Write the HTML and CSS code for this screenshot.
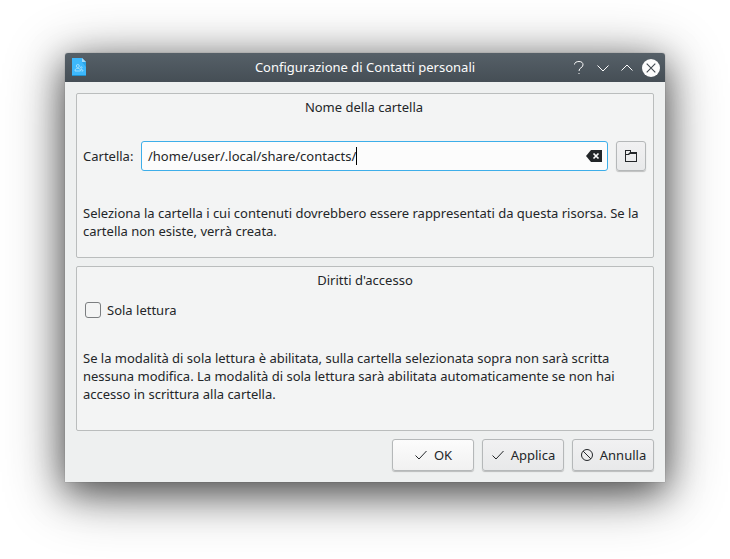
FILE: index.html
```html
<!DOCTYPE html>
<html lang="it">
<head>
<meta charset="utf-8">
<title>Configurazione di Contatti personali</title>
<link rel="stylesheet" href="styles.css">
</head>
<body>
<main class="window">
  <header class="titlebar">
    <svg class="app-icon" width="14" height="18" viewBox="0 0 14 18">
      <path d="M0 0h10l4 4v14H0z" fill="#3db8fc"/>
      <path d="M0 17h14v1H0z" fill="#2091cf"/>
      <path d="M10 4h4v5z" fill="#2ba3e5"/>
      <path d="M10 0l4 4h-4z" fill="#a5dcfa"/>
      <g fill="none" stroke="#a5e0ff" stroke-width=".9"><circle cx="5.800" cy="8" r="1.500"/><path d="M3 13c0-2 1-2.600 2.800-2.600S8.500 11 8.500 13z"/><circle cx="9.300" cy="9.500" r=".8"/><path d="M9 11.500c1.500 0 2 .5 2 1.500H9.500"/></g>
    </svg>
    <h1>Configurazione di Contatti personali</h1>
    <svg class="controls" width="90" height="20" viewBox="0 0 90 20" fill="none" stroke="#fcfcfc">
      <path d="M4.500 6.500C4.500 4.500 6.500 3.500 9 3.500c2.700 0 4 1.300 4 3.400 0 3.100-4 2.500-4 6.100"/>
      <path d="M8.500 15.500h1"/>
      <path d="M27.500 7.500l5.500 5.500 5.500-5.500M51.500 12.500L57 7l5.500 5.500"/>
      <circle cx="81" cy="10" r="9" fill="#fcfcfc" stroke="none"/>
      <path d="M76.700 5.700l8.600 8.600M85.300 5.700l-8.600 8.600" stroke="#414950" stroke-width="1.100"/>
    </svg>
  </header>
  <section class="group">
    <h2 class="folder-title">Nome della cartella</h2>
    <div class="path-row">
      <label>Cartella:</label>
      <div class="field"><span class="value">/home/user/.local/share/contacts/</span><span class="caret"></span>
        <svg class="clear" width="16" height="12" viewBox="0 0 16 12"><path d="M0 6l5-6h11v12H5z" fill="#232629"/><path d="M7.500 3.500l5 5M12.500 3.500l-5 5" stroke="#fcfcfc" stroke-width="1.700"/></svg>
      </div>
      <button class="browse"><svg width="12" height="12" viewBox="0 0 12 12"><path d="M0 0h6v2h6v10H0zM1 1v3h2l2-2V1zM1 5v6h10V4H5L4 5z" fill="#232629" fill-rule="evenodd"/></svg></button>
    </div>
    <p class="folder-text">Seleziona la cartella i cui contenuti dovrebbero essere rappresentati da questa risorsa. Se la<br>cartella non esiste, verrà creata.</p>
  </section>
  <section class="group">
    <h2>Diritti d'accesso</h2>
    <label class="check"><span class="box"></span>Sola lettura</label>
    <p class="rights-text">Se la modalità di sola lettura è abilitata, sulla cartella selezionata sopra non sarà scritta<br>nessuna modifica. La modalità di sola lettura sarà abilitata automaticamente se non hai<br>accesso in scrittura alla cartella.</p>
  </section>
  <footer class="actions">
    <button class="btn ok"><svg width="14" height="14" viewBox="0 0 14 14"><path d="M1.500 7.500l3.500 3.500 7.500-8" fill="none" stroke="#232629"/></svg>OK</button>
    <button class="btn"><svg width="14" height="14" viewBox="0 0 14 14"><path d="M1.500 7.500l3.500 3.500 7.500-8" fill="none" stroke="#232629"/></svg>Applica</button>
    <button class="btn"><svg width="14" height="14" viewBox="0 0 14 14"><g fill="none" stroke="#232629"><circle cx="7" cy="7" r="5.500"/><path d="M3.100 3.100l7.800 7.800"/></g></svg>Annulla</button>
  </footer>
</main>
</body>
</html>
```
FILE: styles.css
```css
* { box-sizing: border-box; }
body {
  margin: 0;
  padding: 53px 65px 0;
  height: 559px;
  overflow: hidden;
  background: #fff;
  color: #232629;
  font: 13px/18px "Noto Sans", sans-serif;
}
h1, h2, p { margin: 0; font-size: inherit; font-weight: 400; }
svg { display: block; flex: none; }
.window {
  width: 600px;
  height: 429px;
  border-radius: 3px 3px 0 0;
  background: #eef0f0;
  box-shadow: 0 0 1px rgba(0,0,0,.5), 0 10px 34px rgba(0,0,0,.5), 0 10px 60px rgba(0,0,0,.45);
}
.titlebar {
  display: grid;
  grid-template-columns: 90px 1fr 90px;
  align-items: center;
  height: 29px;
  padding: 0 5px;
  border-radius: 3px 3px 0 0;
  background: linear-gradient(#566068, #454e55);
  color: #fcfcfc;
  text-align: center;
}
h1 { padding-bottom: 2px; }
.app-icon { margin: 0 0 1px 2px; }
.group {
  height: 165px;
  margin: 11px 11px 0;
  padding: 4px 6px;
  border: 1px solid #babdbd;
  border-radius: 2px;
  background: #f3f4f4;
}
.group + .group { margin-top: 8px; }
h2 { text-align: center; }
.folder-title { padding-right: 2px; }
.path-row { display: flex; align-items: center; height: 30px; margin-top: 25px; }
.field {
  display: flex;
  align-items: center;
  width: 467px;
  height: 30px;
  margin: 0 8px 0 auto;
  padding: 0 5px 0 6px;
  border: 1px solid #3daee9;
  border-radius: 3px;
  background: #fcfcfc;
}
.caret { width: 1px; height: 18px; background: #000; }
.clear { margin-left: auto; }
button {
  display: flex;
  align-items: center;
  justify-content: center;
  padding: 0;
  border: 1px solid #b5b8b9;
  border-radius: 3px;
  background: linear-gradient(#f1f1f2, #e8e9ea);
  box-shadow: 0 1px 1px rgba(0,0,0,.22);
  color: inherit;
  font: inherit;
}
.browse { width: 30px; height: 30px; margin-right: 1px; }
.folder-text, .rights-text { letter-spacing: -.01px; white-space: nowrap; }
.folder-text { margin-top: 33px; }
.check { display: flex; align-items: center; height: 18px; margin-top: 12px; }
.box { width: 16px; height: 16px; margin: 0 6px 0 2px; border: 1px solid #7b7e80; border-radius: 3px; }
.rights-text { margin-top: 30px; }
.actions { display: flex; justify-content: flex-end; gap: 8px; margin: 8px 11px 0; }
.btn { width: 82px; height: 32px; gap: 6px; }
.ok { background: linear-gradient(#fcfcfc, #f1f1f1); }
```
